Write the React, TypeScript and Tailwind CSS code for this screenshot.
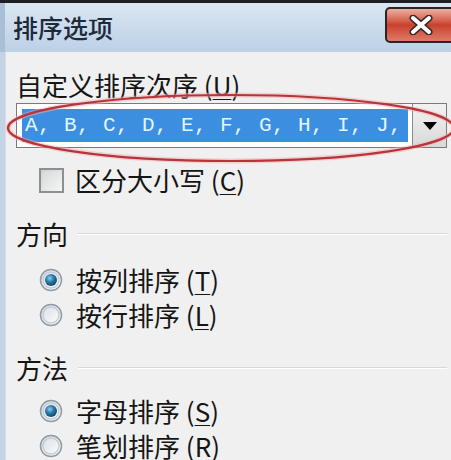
import React from "react"

const cjk = "font-['Noto_Sans_CJK_SC','Noto_Sans',sans-serif]"

function Radio({ checked }: { checked: boolean }) {
  return (
    <svg width="24" height="24" viewBox="0 0 24 24" className="shrink-0">
      <defs>
        <linearGradient id="rbg" x1="0" y1="0" x2="1" y2="1">
          <stop offset="0" stopColor="#d8dde2" />
          <stop offset="1" stopColor="#ffffff" />
        </linearGradient>
        <radialGradient id="rdot" cx="0.4" cy="0.35" r="0.7">
          <stop offset="0" stopColor="#8fd0f0" />
          <stop offset="0.45" stopColor="#2b7fae" />
          <stop offset="1" stopColor="#0f3f60" />
        </radialGradient>
      </defs>
      <circle cx="12" cy="12" r="10.5" fill="url(#rbg)" stroke="#8e9aa4" strokeWidth="1.5" />
      <circle cx="12" cy="12" r="8" fill="none" stroke="#c4ccd3" strokeWidth="1.5" />
      {checked && <circle cx="12" cy="12" r="6" fill="url(#rdot)" />}
    </svg>
  )
}

function Checkbox() {
  return (
    <div className="h-[25px] w-[25px] shrink-0 border-2 border-[#8e8f8f] bg-gradient-to-br from-[#cfd2d4] to-[#f6f6f6] p-[2px]">
      <div className="h-full w-full bg-gradient-to-br from-[#d9dcde] to-[#f2f2f2]" />
    </div>
  )
}

function Hotkey({ k }: { k: string }) {
  return (
    <span>
      (<span className="underline decoration-1 underline-offset-[3px]">{k}</span>)
    </span>
  )
}

function GroupTitle({ label }: { label: string }) {
  return (
    <div className="flex h-[34px] items-center gap-[10px]">
      <span className="text-[26px] leading-none text-[#151515]">{label}</span>
      <div className="flex-1">
        <div className="h-px bg-[#d6d9dc]" />
        <div className="h-px bg-white" />
      </div>
    </div>
  )
}

function Option({ checked, label, hotkey }: { checked: boolean; label: string; hotkey: string }) {
  return (
    <div className="flex h-[35px] items-center gap-[13px] pl-[23px]">
      <Radio checked={checked} />
      <span className="text-[26px] leading-none text-[#151515]">
        {label} <Hotkey k={hotkey} />
      </span>
    </div>
  )
}

export default function App() {
  return (
    <div className={`relative h-[460px] w-[451px] overflow-hidden bg-[#f0f0f0] ${cjk}`}>
      <div className="h-[3px] bg-[#1d1f22]" />
      <header className="flex h-[49px] items-center border-l-[5px] border-[#a9bfd6] bg-gradient-to-b from-[#dae6f2] to-[#bcd0e6] pl-[8px]">
        <span className="text-[25px] font-medium leading-none text-[#1d2a3a]">排序选项</span>
        <button className="relative ml-auto mr-[-6px] mt-[-6px] flex h-[36px] w-[72px] items-center justify-center overflow-hidden rounded-[5px] border-2 border-[#2b2324] bg-gradient-to-b from-[#ebb0a2] via-[#c9402c] to-[#de7a68]">
          <svg width="26" height="20" viewBox="0 0 26 20">
            <path d="M5 3 L21 17 M21 3 L5 17" stroke="#3a2a2a" strokeWidth="7" strokeLinecap="round" />
            <path d="M5 3 L21 17 M21 3 L5 17" stroke="#ffffff" strokeWidth="4" strokeLinecap="round" />
          </svg>
        </button>
      </header>

      <main className="flex h-[408px] border-l-[5px] border-[#c3d4e6]">
        <div className="min-w-0 flex-1 border-l border-[#d6dce3] pl-[10px] pr-[4px] pt-[14px]">
          <div className="h-[37px] text-[26px] leading-[37px] text-[#151515]">
            自定义排序次序 <Hotkey k="U" />
          </div>

          <div className="flex h-[45px] border border-[#7a7a7a] bg-white">
            <div className="m-[5px] mr-[4px] flex min-w-0 flex-1 items-center overflow-hidden bg-[#3b8ee0] pl-[3px]">
              <span className="whitespace-pre font-['Liberation_Mono',monospace] text-[21px] leading-none tracking-[0.4px] text-[#e2f6ff]">
                A, B, C, D, E, F, G, H, I, J,
              </span>
            </div>
            <div className="flex w-[34px] shrink-0 items-center justify-center border-l border-[#8a8a8a] bg-gradient-to-b from-[#f2f2f2] to-[#d9d9d9]">
              <svg width="16" height="10" viewBox="0 0 16 10">
                <path d="M1 1 H15 L8 9 Z" fill="#000" />
              </svg>
            </div>
          </div>

          <div className="mt-[15px] flex h-[34px] items-center gap-[11px] pl-[23px]">
            <Checkbox />
            <span className="text-[26px] leading-none text-[#151515]">
              区分大小写 <Hotkey k="C" />
            </span>
          </div>

          <div className="mt-[20px]">
            <GroupTitle label="方向" />
          </div>
          <div className="mt-[11px]">
            <Option checked label="按列排序" hotkey="T" />
            <Option checked={false} label="按行排序" hotkey="L" />
          </div>

          <div className="mt-[19px]">
            <GroupTitle label="方法" />
          </div>
          <div className="mt-[8px]">
            <Option checked label="字母排序" hotkey="S" />
            <Option checked={false} label="笔划排序" hotkey="R" />
          </div>
        </div>
      </main>

      <svg className="pointer-events-none absolute left-0 top-0" width="451" height="460">
        <ellipse cx="231" cy="128" rx="223" ry="33" fill="none" stroke="#f0b0b0" strokeWidth="5" opacity="0.5" />
        <ellipse cx="231" cy="128" rx="223" ry="33" fill="none" stroke="#b8343a" strokeWidth="2.2" />
      </svg>
    </div>
  )
}
